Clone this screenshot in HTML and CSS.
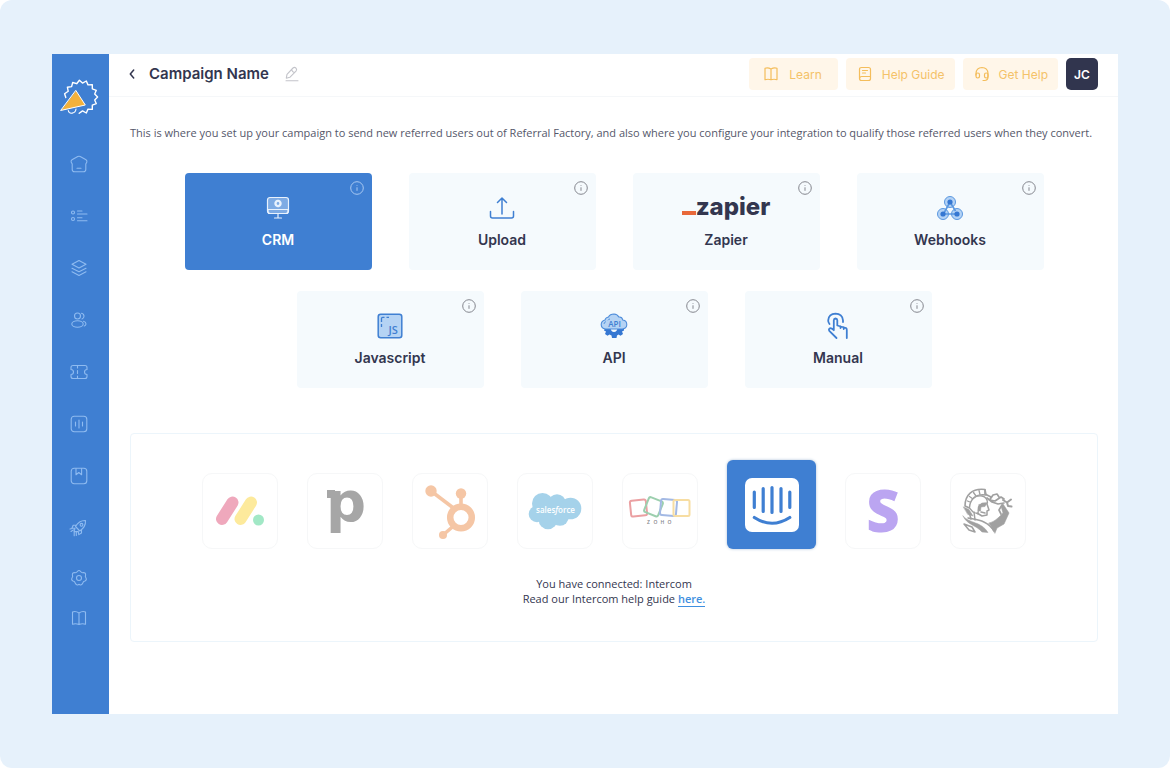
FILE: index.html
```html
<!DOCTYPE html>
<html lang="en">
<head>
<meta charset="utf-8">
<meta name="viewport" content="width=device-width, initial-scale=1">
<title>Campaign Name</title>
<link rel="stylesheet" href="styles.css">
</head>
<body>
<div class="backdrop">
<div class="app">
  <aside class="sidebar">
    <a class="brand" href="#" aria-label="Referral Factory">
      <svg width="40" height="40" viewBox="0 0 40 40" fill="none" stroke="#fff" stroke-width="1.4" stroke-linejoin="round" stroke-linecap="round">
        <path d="M6.8 20.5 5.600 16.800 9.200 14.300 8.400 10.200 12.600 9.600 13.700 5.500 17.700 6.700 20.400 3.300 23.500 6.100 27.300 4 29 7.900 33.300 7.600 33.300 11.800 37.300 13.300 35.700 17.100 38.600 20 35.700 22.900 37.300 26.700 33.300 28.200 33.300 32.400 29 32.100 27.300 36 23.500 33.900 20.200 36.300"/>
        <path d="M9.300 33.500C10 37.500 16.500 37 17 32" stroke-width="1.100"/>
        <path d="M17 13.700 26.300 28 2 33.400Z" fill="#f2b13c" stroke-width="1"/>
      </svg>
    </a>
    <nav class="nav" aria-label="Main">
      <a href="#" aria-label="Home"><svg class="ico" viewBox="0 0 18 18"><path d="M7.800 1.500 2 4.800Q.800 5.500 1.100 7L2.200 9V14.500Q2.300 16.800 4.500 16.800H13.500Q15.700 16.800 15.800 14.500V9L16.900 7Q17.200 5.500 16 4.800L10.200 1.500Q9 .900 7.800 1.500ZM7 13.200H11"/></svg></a>
      <a href="#" aria-label="Campaigns"><svg class="ico" viewBox="0 0 18 18"><circle cx="3" cy="5.500" r="1.500"/><circle cx="3" cy="12" r="1.500"/><path d="M7.500 4H12M7.500 7H17M7.500 10.700H12M7.500 13.700H17"/></svg></a>
      <a href="#" aria-label="Layers"><svg class="ico" viewBox="0 0 18 18"><path d="M9 1.500 16 5.200 9 9 2 5.200ZM2 9.200 9 12.800 16 9.200M2 12.800 9 16.500 16 12.800"/></svg></a>
      <a href="#" aria-label="Users"><svg class="ico" viewBox="0 0 18 18"><circle cx="7.500" cy="5" r="3"/><ellipse cx="7.500" cy="13" rx="5.700" ry="3.200"/><path d="M11.500 2.300Q14 2.800 14 5.200 13.900 7.300 12 8M13.500 10.300Q16 11 16 13 15.800 14.500 14.300 15"/></svg></a>
      <a href="#" aria-label="Rewards"><svg class="ico" viewBox="0 0 18 18"><path d="M3 2.500H15Q17 2.500 17 4.500V6.500Q14.500 6.700 14.500 9T17 11.500V13.500Q17 15.500 15 15.500H3Q1 15.500 1 13.500V11.500Q3.500 11.300 3.500 9T1 6.500V4.500Q1 2.500 3 2.500ZM7.500 3V5M7.500 7.500V10.500M7.500 13V15"/></svg></a>
      <a href="#" aria-label="Analytics"><svg class="ico" viewBox="0 0 18 18"><rect x="1.200" y="1.200" width="15.600" height="15.600" rx="3"/><path d="M5.500 7V11M9 5V13M12.500 7V11"/></svg></a>
      <a href="#" aria-label="Saved"><svg class="ico" viewBox="0 0 18 18"><rect x="1.200" y="1.200" width="15.600" height="15.600" rx="3"/><path d="M6 1.500V7.700L8.800 5.500 11.600 7.700V1.500"/></svg></a>
      <a href="#" aria-label="Launch"><svg class="ico" viewBox="0 0 18 18"><path d="M5.500 7.500C8 3.300 11.500 1.300 15.500 1.500 15.800 5.500 13.800 9.300 9.800 12L5.500 7.500ZM6.500 6 3.200 6.200 2 9 5 9.200M11.500 10.500 11.500 14 8.800 15.600 8.200 12.400M5 9.200 4 12.800 8.200 12.400M1 12.500 3.400 10.900M4.200 16.700V13M0 10 2 9.500M6.300 16.500V13.500"/><circle cx="11.500" cy="5.800" r="1.400"/></svg></a>
    </nav>
    <nav class="nav nav-secondary" aria-label="Account">
      <a href="#" aria-label="Settings"><svg class="ico" viewBox="0 0 18 18"><circle cx="9" cy="9" r="2.500"/><path d="M7.400 2.500Q9 .500 10.600 2.500 11.600 4 13.400 3.600 15.800 3.600 15.600 6 14.900 7.700 16 9 17 11 15 12 13.200 12.300 12.800 14 11.700 16.500 9.800 15.800 9 15 8.200 15.800 6.300 16.500 5.200 14 4.800 12.300 3 12 1 11 2 9 3.100 7.700 2.400 6 2.200 3.600 4.600 3.600 6.400 4 7.400 2.500Z"/></svg></a>
      <a href="#" aria-label="Docs"><svg class="ico" viewBox="0 0 18 18"><path d="M9 4Q5.500 1.500 2.500 3V15.300Q5.500 14 9 15.500 12.500 14 15.500 15.300V3Q12.500 1.500 9 4ZM9 4V15.500"/></svg></a>
    </nav>
  </aside>

  <main class="main">
    <header class="topbar">
      <a class="back" href="#" aria-label="Back"><svg width="6" height="10" viewBox="0 0 6 10" fill="none" stroke="#33364f" stroke-width="1.500" stroke-linecap="round" stroke-linejoin="round"><path d="M4.700 1 1.300 5 4.700 9"/></svg></a>
      <h1 class="title">Campaign Name</h1>
      <button class="edit" type="button" aria-label="Edit name"><svg width="14" height="16" viewBox="0 0 14 16" fill="none" stroke="#c3c4ca" stroke-width="1.100" stroke-linejoin="round" stroke-linecap="round"><path d="M2 8.400 8 2Q9.500.700 11 2.200 12.300 3.700 11 5.200L4.800 11.300 1.300 12.200ZM6.600 3.600Q7.300 6 9.500 6.600M1 14.700H13"/></svg></button>
      <div class="actions">
        <button class="action" type="button"><svg width="16" height="16" viewBox="0 0 16 16"><path d="M8 3Q5 1.200 2 2.200V13.700Q5 12.800 8 13.700 11 12.800 14 13.700V2.200Q11 1.200 8 3ZM8 3V13.700"/></svg><span>Learn</span></button>
        <button class="action action-tight" type="button"><svg width="16" height="16" viewBox="0 0 16 16"><path d="M4.500 1.500H11.500Q13.500 1.500 13.500 3.500V12.500Q13.500 14.500 11.500 14.500H4.500Q2.500 14.500 2.500 12.500V3.500Q2.500 1.500 4.500 1.500ZM2.800 12Q3 10.500 4.500 10.500H13.500M5.500 4.500H10.500M5.500 7H8.500"/></svg><span>Help Guide</span></button>
        <button class="action action-tight" type="button"><svg width="16" height="16" viewBox="0 0 16 16"><path d="M2 9V7.500Q2.200 1.700 8 1.500 13.800 1.700 14 7.500V11Q14 14.300 10.500 14.500H9"/><rect x="2" y="7" width="3.500" height="5" rx="1.700"/><rect x="10.500" y="7" width="3.500" height="5" rx="1.700"/></svg><span>Get Help</span></button>
        <button class="avatar" type="button">JC</button>
      </div>
    </header>

    <section class="content">
      <p class="intro">This is where you set up your campaign to send new referred users out of Referral Factory, and also where you configure your integration to qualify those referred users when they convert.</p>

      <div class="methods">
        <button class="method method-on" type="button">
          <svg class="info" viewBox="0 0 14 14"><circle cx="7" cy="7" r="6.300"/><path d="M7 6.300V9.800M7 4V4.700"/></svg>
          <span class="art"><svg width="24" height="24" viewBox="0 0 24 24" fill="none" stroke="#e9f2fd" stroke-width="1.200" stroke-linecap="round"><rect x="1.500" y="1.500" width="21" height="16" rx="2.500" fill="#7eabe4"/><path d="M2 13.500H22V15.500Q22 17.500 20 17.500H4Q2 17.500 2 15.500ZM12 17.500V22M8.500 22H15.500"/><circle cx="12" cy="7.500" r="2.800" fill="#7eabe4" stroke-width="1.800" stroke-dasharray="1.500 .700"/><circle cx="12" cy="7.500" r="2"/></svg></span>
          <span class="name">CRM</span>
        </button>
        <button class="method" type="button">
          <svg class="info" viewBox="0 0 14 14"><circle cx="7" cy="7" r="6.300"/><path d="M7 6.300V9.800M7 4V4.700"/></svg>
          <span class="art"><svg width="26" height="24" viewBox="0 0 26 24" fill="none" stroke="#3f7fd2" stroke-width="1.500" stroke-linecap="round" stroke-linejoin="round"><path d="M13 18V2M8.500 6.500 13 2 17.500 6.500M1.500 15.500V20Q1.500 22 3.500 22H22.500Q24.500 22 24.500 20V15.500"/></svg></span>
          <span class="name">Upload</span>
        </button>
        <button class="method" type="button">
          <svg class="info" viewBox="0 0 14 14"><circle cx="7" cy="7" r="6.300"/><path d="M7 6.300V9.800M7 4V4.700"/></svg>
          <span class="art zapier"><i class="zapier-bar"></i>zapier</span>
          <span class="name">Zapier</span>
        </button>
        <button class="method" type="button">
          <svg class="info" viewBox="0 0 14 14"><circle cx="7" cy="7" r="6.300"/><path d="M7 6.300V9.800M7 4V4.700"/></svg>
          <span class="art"><svg width="28" height="26" viewBox="0 0 28 26"><g fill="#b3d2f5" stroke="#5b98e0" stroke-width="1"><circle cx="14" cy="7" r="5.500"/><circle cx="7" cy="19" r="5.500"/><circle cx="21" cy="19" r="5.500"/></g><path d="M14 7 19.500 16M14 7 8 18M7 19H20" fill="none" stroke="#5b98e0" stroke-width="1.600"/><g fill="#3577d2"><circle cx="14" cy="7" r="2.600"/><circle cx="7" cy="19" r="2.600"/><circle cx="21" cy="19" r="2.600"/></g></svg></span>
          <span class="name">Webhooks</span>
        </button>
        <button class="method" type="button">
          <svg class="info" viewBox="0 0 14 14"><circle cx="7" cy="7" r="6.300"/><path d="M7 6.300V9.800M7 4V4.700"/></svg>
          <span class="art"><svg width="26" height="26" viewBox="0 0 26 26"><rect x="1.200" y="1.200" width="23.600" height="23.600" rx="2.500" fill="#b5d3f4" stroke="#3f7fd2" stroke-width="1.500"/><path d="M4.500 14V11M4.500 9V5.500Q4.500 4.300 5.700 4.300H7.500M9.500 4.300H12" fill="none" stroke="#3f7fd2" stroke-width="1.300"/><text class="js-mark" x="11.500" y="21">JS</text></svg></span>
          <span class="name">Javascript</span>
        </button>
        <button class="method" type="button">
          <svg class="info" viewBox="0 0 14 14"><circle cx="7" cy="7" r="6.300"/><path d="M7 6.300V9.800M7 4V4.700"/></svg>
          <span class="art"><svg width="28" height="26" viewBox="0 0 28 26"><path d="M5 15H10.500Q11 19 14 19T17.500 15H24V17.500L22 18.500 23 21 20.500 22.700 18.500 21.500 17 22.500 16.500 25H12L11.500 22.500 9.500 21.500 7.500 22.700 5 21 6 18.500 4 17.500Z" fill="#3577d2"/><path d="M5.500 16Q1.200 15.500 1.200 11.500 1.300 8 5 7 5.500 4.500 8.500 4 10 1 14 1 17.500 1.200 18.800 4 22 3.500 22.800 7 26.800 7.500 26.800 11.800 26.700 15.500 22.500 16Z" fill="#b5d3f4" stroke="#4d8cda" stroke-width="1.100"/><path d="M4 11Q4.200 9 6 8.600M8 7.300Q8.700 6 10 6" fill="none" stroke="#4d8cda" stroke-width=".900"/><text class="api-mark" x="14.500" y="13.700">API</text></svg></span>
          <span class="name">API</span>
        </button>
        <button class="method" type="button">
          <svg class="info" viewBox="0 0 14 14"><circle cx="7" cy="7" r="6.300"/><path d="M7 6.300V9.800M7 4V4.700"/></svg>
          <span class="art"><svg width="24" height="28" viewBox="0 0 24 28" fill="none" stroke="#3f7fd2" stroke-width="1.800" stroke-linecap="round" stroke-linejoin="round"><path d="M3.500 12Q2 10 2.200 8.300 2.800 2 9.500 1.700 16.300 2 17 8.300V10M10.500 26 3.300 18.800Q2.300 17 4 16.200 5.500 16 7.800 18.200V8.300Q7.900 6.600 9.500 6.500 11.200 6.600 11.300 8.300V13.500L20 16Q20.800 16.500 20.800 18V26M14.500 14.500V16M17.700 15.300V17"/></svg></span>
          <span class="name">Manual</span>
        </button>
      </div>

      <div class="panel">
        <div class="tiles">
          <button class="tile" type="button" aria-label="monday.com"><svg width="50" height="32" viewBox="0 0 50 32" stroke-width="12" stroke-linecap="round"><path d="M7 24 17.500 7.500" stroke="#efa8bc"/><path d="M25.500 24 36 7.500" stroke="#fdea9c"/><circle cx="43.500" cy="25" r="5.500" fill="#a2e8c6"/></svg></button>
          <button class="tile" type="button" aria-label="Pipedrive"><svg width="42" height="72" viewBox="0 -10 42 72" fill="#a6a6a6"><rect x="3" y="5" width="8" height="8"/><text class="p-mark" x="2" y="36">p</text></svg></button>
          <button class="tile" type="button" aria-label="HubSpot"><svg width="52" height="56" viewBox="0 0 52 56" fill="#f5c6a5" stroke="#f5c6a5"><path d="M7 8 32 27M37 10V24M33 40 19 52" stroke-width="3.600"/><g stroke="none"><circle cx="7" cy="8" r="5.700"/><circle cx="37" cy="10.500" r="5.200"/><circle cx="19" cy="52" r="4"/></g><circle cx="37" cy="34.500" r="10.800" fill="#fff" stroke-width="6.500"/></svg></button>
          <button class="tile" type="button" aria-label="Salesforce"><svg width="54" height="38" viewBox="0 0 54 38"><g fill="#a5d2ea"><circle cx="14.500" cy="11.500" r="10.500"/><circle cx="29" cy="11" r="8.800"/><circle cx="42.500" cy="16.500" r="10.800"/><circle cx="9" cy="22" r="8.300"/><circle cx="20" cy="28" r="9.300"/><circle cx="32" cy="25" r="8.700"/><rect x="12" y="12" width="28" height="15"/></g><text class="sf-mark" x="27.500" y="20.500">sales<tspan font-style="italic">f</tspan>orce</text></svg></button>
          <button class="tile" type="button" aria-label="Zoho"><svg width="64" height="30" viewBox="0 0 64 30" fill="none" stroke-width="2"><rect x="2.500" y="4" width="16" height="16" rx="2" stroke="#eba0a2" transform="rotate(-6 10.500 12)"/><rect x="18" y="2.800" width="15" height="16" rx="2" stroke="#9ccfae" transform="rotate(22 25.500 10.800)"/><rect x="32.500" y="3.500" width="16" height="16" rx="2" stroke="#a3b9e4" transform="rotate(5 40.500 11.500)"/><rect x="45.500" y="4" width="16" height="16" rx="1.500" stroke="#f7dda2"/><text class="zoho-mark" x="19 25.500 32.500 39.500" y="27.500">ZOHO</text></svg></button>
          <button class="tile tile-on" type="button" aria-label="Intercom"><svg width="54" height="54" viewBox="0 0 54 54" fill="none" stroke="#3f7fd2" stroke-width="3.200" stroke-linecap="round"><rect width="54" height="54" rx="7" fill="#fff" stroke="none"/><path d="M9.300 14V29.500M18.200 10.500V33.500M27 9.500V34.500M36 10.500V33.500M44.800 14V29.500M9.300 39.500Q27 51 44.800 39.500"/></svg></button>
          <button class="tile" type="button" aria-label="Stripe"><svg width="40" height="72" viewBox="0 -12 40 72" fill="#bba5f1"><text class="s-mark" x="20" y="45">S</text></svg></button>
          <button class="tile" type="button" aria-label="Gladiator"><svg width="54" height="50" viewBox="0 0 54 50" fill="#a0a0a0" stroke="#a0a0a0" stroke-linecap="round" stroke-linejoin="round"><path d="M4 20C4 9 11 2 24 3.500L25 9C15 7.500 10 12 8.500 22Z" fill="#fff" stroke-width="1.600"/><path d="M6.500 15 10 16.500M8.500 10.500 12 13M12.500 6.500 15 10M18 4.500 19 8.500" fill="none" stroke-width="1.300"/><path d="M8.500 22C9 13.500 14 9 21 10 25 11 26.500 14 26.500 17L21 17.500 17.500 21 17 28 12 26Z" fill="#fff" stroke-width="1.300"/><path d="M2.500 21 8 23.500 12 30 7 28.500ZM18 18.500 26 17 24 20.500 20 21 19.500 25 17.500 25Z" stroke-width=".500"/><path d="M26 18 28 24 26 25 26 29 21 30 16 27M20 26 24 27M13 26 14 34M8 26 10 33" fill="none" stroke-width="1.500"/><path d="M2 30C9 38 20 35 27 46.500L21 46C15 39 6 39 2 30Z" stroke-width=".500"/><path d="M3 38 11 41 14 46 8 44ZM7 32C16 34 26 34 33 45" fill="none" stroke-width="1.500"/><path d="M28 37C34 36 39 30 42 27L40 20 42 18 48 27 43 38 36 42 34 47Z" stroke-width=".600"/><path d="M24 8 30 11 29 14 34 15 40 11 43 13M26 12 31 16 37 18 43 17M24 8V4M38 11 36 8 32 9 30 12M41 19 38 24 40 28" fill="none" stroke-width="1.700"/><path d="M42 14 46 16.500 50 13.500M46 16.500 47 20 50.500 20.500" fill="none" stroke-width="2"/></svg></button>
        </div>
        <p class="status">You have connected: Intercom<br>Read our Intercom help guide <a href="#">here.</a></p>
      </div>
    </section>
  </main>
</div>
</div>
</body>
</html>
```
FILE: styles.css
```css
* { box-sizing: border-box; }

body {
  margin: 0;
  background: #fff;
  color: #33364f;
  font-family: Inter, "Liberation Sans", sans-serif;
  font-size: 12px;
}

button {
  padding: 0;
  border: 0;
  background: none;
  color: inherit;
  font: inherit;
  cursor: pointer;
}

h1, p { margin: 0; }

svg {
  display: block;
  overflow: visible;
}

.backdrop {
  display: flex;
  min-height: 100vh;
  padding: 54px 52px;
  border-radius: 12px;
  background: #e6f1fb;
}

.app {
  display: flex;
  flex: 1;
  background: #fff;
}

.sidebar {
  display: flex;
  flex-direction: column;
  align-items: center;
  width: 57px;
  padding: 23px 3px 0 0;
  background: #3f7fd2;
  flex: none;
}

.nav {
  display: flex;
  flex-direction: column;
  gap: 34px;
  margin-top: 38px;
}

.nav-secondary {
  gap: 22px;
  margin-top: 32px;
}

.ico {
  width: 18px;
  height: 18px;
  fill: none;
  stroke: #8fbbf0;
  stroke-width: 1.1;
  stroke-linecap: round;
  stroke-linejoin: round;
}

.main {
  flex: 1;
  min-width: 0;
}

.topbar {
  display: flex;
  align-items: center;
  padding: 4px 20px 6px;
  border-bottom: 1px solid #f5f7f9;
}

.title {
  margin: 0 16px 0 14px;
  font-size: 15px;
  font-weight: 600;
  line-height: 20px;
}

.actions {
  display: flex;
  gap: 8px;
  margin-left: auto;
}

.action {
  display: flex;
  align-items: center;
  gap: 10px;
  height: 32px;
  padding: 0 16px 0 14px;
  border-radius: 4px;
  background: #fff6e9;
  color: #f4c268;
}

.action-tight {
  gap: 9px;
  padding: 0 10px 0 11px;
}

.action svg {
  fill: none;
  stroke: #f4bd5b;
  stroke-width: 1.2;
  stroke-linejoin: round;
  stroke-linecap: round;
}

.avatar {
  width: 32px;
  height: 32px;
  border-radius: 5px;
  background: #31354e;
  color: #fff;
  font-weight: 600;
}

.content { padding: 28px 20px 0 21px; }

.intro,
.status {
  font-family: "Open Sans", "Liberation Sans", sans-serif;
  font-size: 11px;
}

.intro {
  color: #55576a;
  line-height: 16px;
}

.methods {
  display: flex;
  flex-wrap: wrap;
  justify-content: center;
  gap: 21px 37px;
  margin-top: 32px;
}

.method {
  position: relative;
  display: flex;
  flex-direction: column;
  align-items: center;
  width: 187px;
  height: 97px;
  padding-top: 20px;
  border-radius: 4px;
  background: #f5fafd;
}

.method-on {
  background: #3f7fd2;
  color: #fff;
}

.info {
  position: absolute;
  top: 8px;
  right: 8px;
  width: 14px;
  height: 14px;
  fill: none;
  stroke: #85878f;
  stroke-width: 1;
}

.method-on .info { stroke: #a9c9f2; }

.art {
  display: flex;
  align-items: center;
  justify-content: center;
  height: 30px;
}

.name {
  margin-top: 7px;
  font-size: 14px;
  font-weight: 600;
  line-height: 20px;
}

.zapier {
  padding-bottom: 3px;
  font-size: 24px;
  font-weight: 800;
}

.zapier-bar {
  align-self: flex-end;
  width: 14px;
  height: 4px;
  margin-bottom: 5px;
  background: #e8683a;
}

.js-mark {
  fill: #3f7fd2;
  font: 600 11px "Open Sans", sans-serif;
}

.api-mark {
  fill: #3f7fd2;
  font: 600 8px "Open Sans", sans-serif;
  text-anchor: middle;
}

.panel {
  margin-top: 45px;
  padding: 26px 20px 35px;
  border: 1px solid #ecf5fb;
  border-radius: 4px;
}

.tiles {
  display: flex;
  align-items: flex-end;
  justify-content: center;
  gap: 29px;
}

.tile {
  display: flex;
  align-items: center;
  justify-content: center;
  width: 76px;
  height: 76px;
  border: 1px solid #f6f7f8;
  border-radius: 10px;
  background: #fff;
}

.tile-on {
  width: 89px;
  height: 89px;
  border: 0;
  border-radius: 6px;
  background: #3f7fd2;
  box-shadow: 0 0 3px #a9bfd6;
}

.p-mark { font: 700 56px "DejaVu Sans", sans-serif; }

.s-mark {
  font: 800 58px "Open Sans", sans-serif;
  text-anchor: middle;
}

.sf-mark {
  fill: #fff;
  font: 600 8px "Open Sans", sans-serif;
  text-anchor: middle;
}

.zoho-mark {
  fill: #85858a;
  stroke: none;
  font: 600 5px "Open Sans", sans-serif;
}

.status {
  margin-top: 27px;
  line-height: 15px;
  text-align: center;
}

.status a {
  border-bottom: 1px solid #3f8fe0;
  color: #3f8fe0;
  font-weight: 600;
  text-decoration: none;
}
```
